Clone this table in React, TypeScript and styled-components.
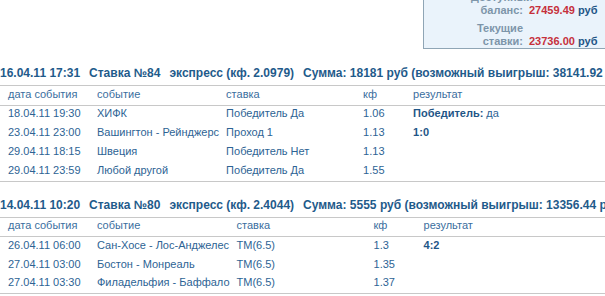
import styled, { createGlobalStyle } from 'styled-components'

const GlobalStyle = createGlobalStyle`
  html, body {
    margin: 0;
    padding: 0;
    background: #ffffff;
    overflow: hidden;
  }
  body {
    font-family: Tahoma, 'Liberation Sans', Arial, sans-serif;
    font-size: 11px;
  }
`

interface BetRow {
  date: string
  event: string
  stake: string
  kf: string
  result?: { label?: string; value?: string }
}

interface Bet {
  created: string
  number: number
  kf: string
  sum: number
  win: string
  rows: BetRow[]
}

const bets: Bet[] = [
  {
    created: '16.04.11 17:31',
    number: 84,
    kf: '2.0979',
    sum: 18181,
    win: '38141.92',
    rows: [
      { date: '18.04.11 19:30', event: 'ХИФК', stake: 'Победитель Да', kf: '1.06', result: { label: 'Победитель:', value: 'да' } },
      { date: '23.04.11 23:00', event: 'Вашингтон - Рейнджерс', stake: 'Проход 1', kf: '1.13', result: { label: '1:0' } },
      { date: '29.04.11 18:15', event: 'Швеция', stake: 'Победитель Нет', kf: '1.13' },
      { date: '29.04.11 23:59', event: 'Любой другой', stake: 'Победитель Да', kf: '1.55' },
    ],
  },
  {
    created: '14.04.11 10:20',
    number: 80,
    kf: '2.4044',
    sum: 5555,
    win: '13356.44',
    rows: [
      { date: '26.04.11 06:00', event: 'Сан-Хосе - Лос-Анджелес', stake: 'ТМ(6.5)', kf: '1.3', result: { label: '4:2' } },
      { date: '27.04.11 03:00', event: 'Бостон - Монреаль', stake: 'ТМ(6.5)', kf: '1.35' },
      { date: '27.04.11 03:30', event: 'Филадельфия - Баффало', stake: 'ТМ(6.5)', kf: '1.37' },
    ],
  },
]

const App = () => {
  return (
    <>
      <GlobalStyle />
      <Page>
        <BalanceBox>
          <BalanceRow>
            <BalanceLabel>Доступный баланс:</BalanceLabel>
            <BalanceValue>
              <Red>27459.49</Red> руб
            </BalanceValue>
          </BalanceRow>
          <BalanceRow>
            <BalanceLabel>Текущие ставки:</BalanceLabel>
            <BalanceValue>
              <Red>23736.00</Red> руб
            </BalanceValue>
          </BalanceRow>
        </BalanceBox>

        {bets.map((bet) => (
          <BetBlock key={bet.number}>
            <BetTitle>
              <TitlePart>{bet.created}</TitlePart>
              <TitlePart>Ставка №{bet.number}</TitlePart>
              <TitlePart>экспресс (кф. {bet.kf})</TitlePart>
              <TitlePart>
                Сумма: {bet.sum} руб (возможный выигрыш: {bet.win} руб)
              </TitlePart>
            </BetTitle>
            <Table>
              <thead>
                <tr>
                  <HeadCell $col="date">дата события</HeadCell>
                  <HeadCell $col="event">событие</HeadCell>
                  <HeadCell $col="stake">ставка</HeadCell>
                  <HeadCell $col="kf">кф</HeadCell>
                  <HeadCell $col="result">результат</HeadCell>
                </tr>
              </thead>
              <tbody>
                {bet.rows.map((row) => (
                  <tr key={row.date + row.event}>
                    <Cell $col="date">{row.date}</Cell>
                    <Cell $col="event">{row.event}</Cell>
                    <Cell $col="stake">{row.stake}</Cell>
                    <Cell $col="kf">{row.kf}</Cell>
                    <Cell $col="result">
                      {row.result?.label && <Strong>{row.result.label}</Strong>}
                      {row.result?.value && ' ' + row.result.value}
                    </Cell>
                  </tr>
                ))}
              </tbody>
            </Table>
          </BetBlock>
        ))}
      </Page>
    </>
  )
}

export default App

type Col = 'date' | 'event' | 'stake' | 'kf' | 'result'

const colWidth: Record<Col, string> = {
  date: '97px',
  event: '1px',
  stake: '137px',
  kf: '50px',
  result: 'auto',
}

const Page = styled.div`
  width: 680px;
  display: flex;
  flex-direction: column;
  gap: 13px;
`
const BalanceBox = styled.div`
  margin: -13px 0 1px 423px;
  padding: 3px 0 0 47px;
  display: flex;
  flex-direction: column;
  gap: 5px;
  background: #eaf3fb;
  border: 1px solid #8fa5b5;
  border-right: none;
  font-weight: 700;
  line-height: 13px;
`
const BalanceRow = styled.div`
  display: grid;
  grid-template-columns: 52px auto;
  column-gap: 6px;
  align-items: end;
`
const BalanceLabel = styled.div`
  text-align: right;
  color: #7d95a9;
`
const BalanceValue = styled.div`
  color: #1f5687;
  white-space: nowrap;
`
const Red = styled.span`
  color: #c6303b;
`
const BetBlock = styled.div`
  display: flex;
  flex-direction: column;
`
const BetTitle = styled.div`
  display: flex;
  align-items: center;
  gap: 9px;
  height: 20px;
  padding-bottom: 2px;
  border-bottom: 1px solid #c8c8c8;
  color: #1f5b8b;
  font-size: 12px;
  font-weight: 700;
  white-space: nowrap;
`
const TitlePart = styled.span``
const Table = styled.table`
  width: 100%;
  border-collapse: collapse;
  color: #2d6394;
  tbody tr:last-child td {
    border-bottom: 1px solid #c8c8c8;
  }
`
const HeadCell = styled.th<{ $col: Col }>`
  box-sizing: border-box;
  height: 19px;
  padding: 0 7px 3px ${(p) => (p.$col === 'date' ? '8px' : '0')};
  text-align: left;
  font-weight: 400;
  color: #3a6e9e;
  white-space: nowrap;
  border-bottom: 1px solid #c8c8c8;
  width: ${(p) => colWidth[p.$col]};
`
const Cell = styled.td<{ $col: Col }>`
  box-sizing: border-box;
  height: 19px;
  padding: 0 7px 3px ${(p) => (p.$col === 'date' ? '8px' : '0')};
  white-space: nowrap;
`
const Strong = styled.b`
  color: #1f5687;
`
